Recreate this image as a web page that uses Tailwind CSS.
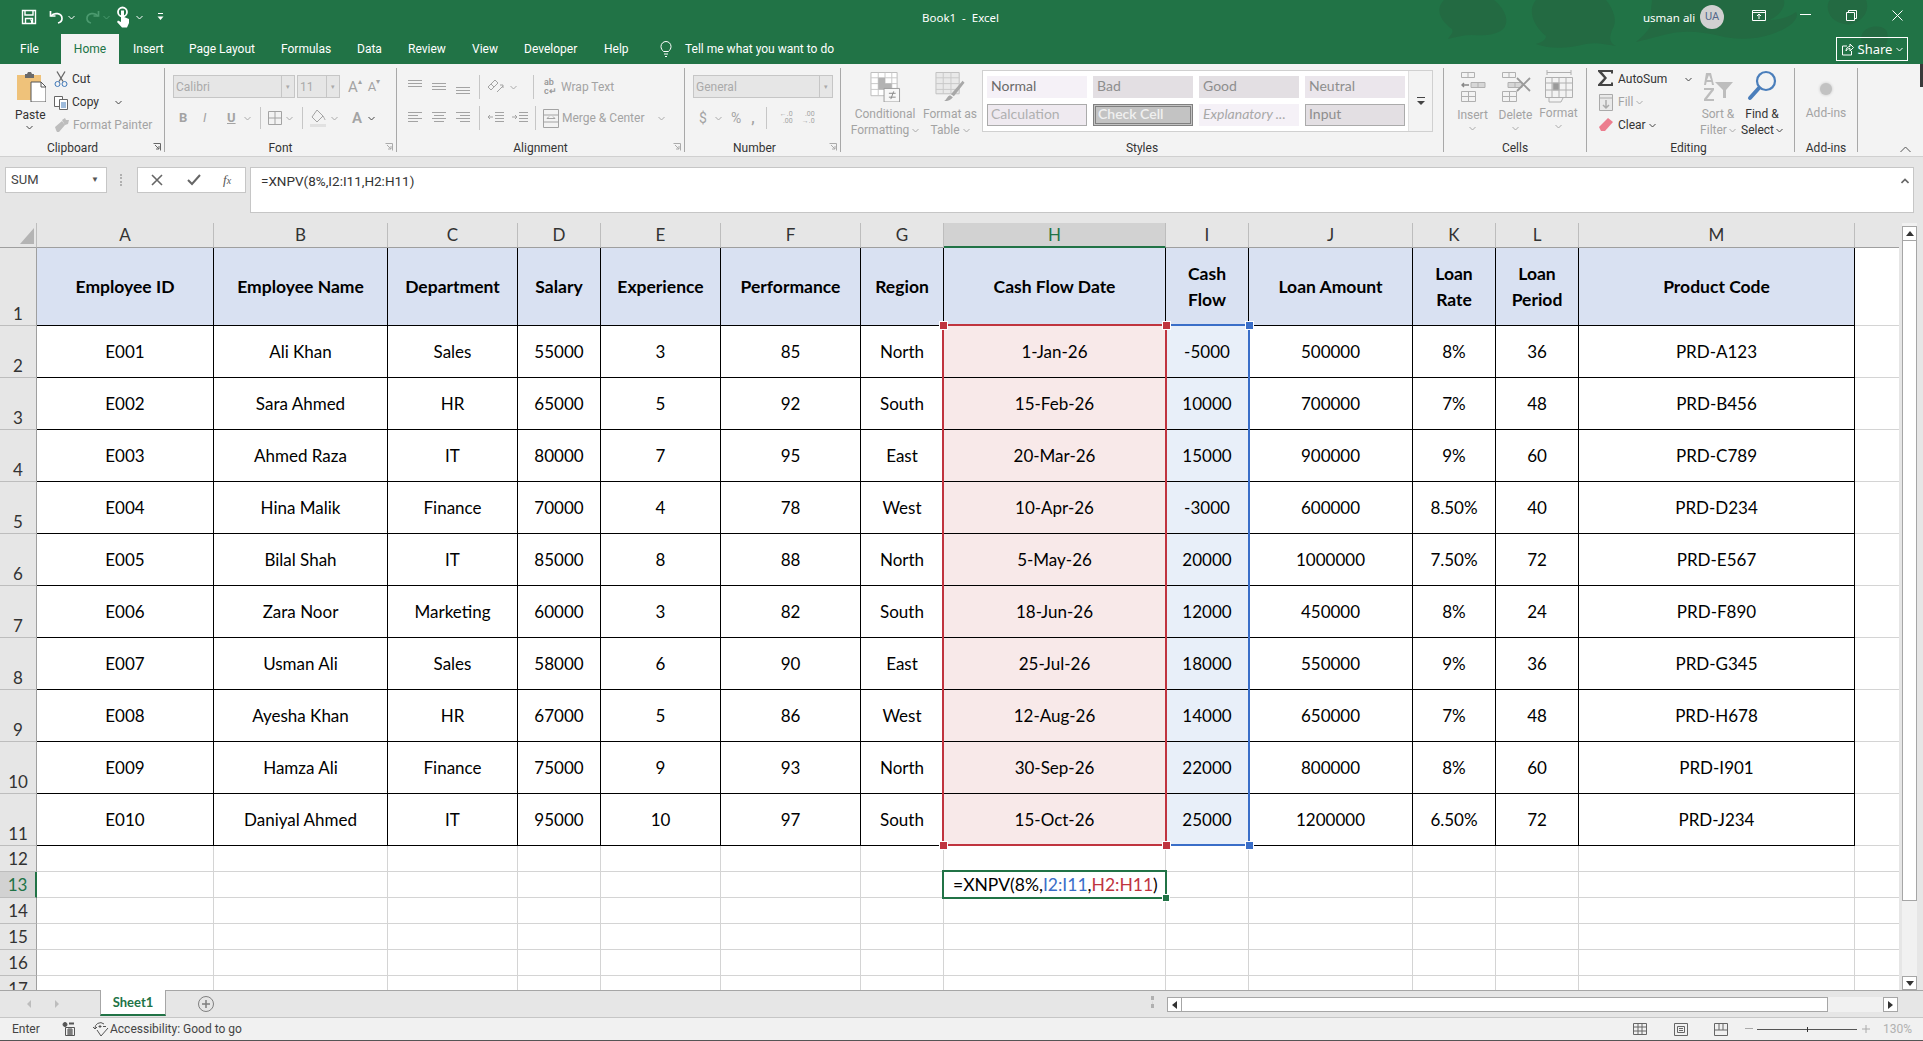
<!DOCTYPE html>
<html lang="en">
<head>
<meta charset="UTF-8">
<title>Book1 - Excel</title>
<script src="https://cdn.jsdelivr.net/npm/@tailwindcss/browser@4"></script>
</head>
<body class="bg-[#e6e6e6] overflow-hidden">
<div class="w-[1923px] h-[1041px] flex flex-col overflow-hidden font-['Roboto',sans-serif] text-[12px] text-[#333]">

  <!-- title bar + tabs -->
  <header class="relative h-[64px] shrink-0 bg-[#217346] text-white overflow-hidden">
    <svg class="absolute left-[1430px] top-0" width="480" height="64" viewBox="0 0 480 64" fill="#236a42">
      <path d="M14 0h50c10 8 16 20 10 28-6 7-20 8-32 7-8 0-16 2-24 4 2-4 6-6 4-10C12 22 4 10 14 0z"/>
      <path d="M106 0h70c8 10 12 22 6 30-2 6-4 12 4 16-12-2-20-4-30-2-16 4-34 6-50 0 6-2 10-4 10-8C106 28 96 12 106 0z"/>
      <path d="M222 0h132c2 8-6 16-14 20 8 0 18-2 26-8 4 6-6 16-24 22-18 6-36 6-52 2-16-4-36-6-52-2-12 3-24 6-32 8 12-10 18-18 16-28C220 10 222 4 222 0z"/>
      <path d="M400 0h36c4 10-2 20-14 24-10 2-22-4-24-14-1-4 0-8 2-10z"/>
      <path d="M432 34c4-8 18-10 24-4 4 6 0 18-4 22h-14c-6-4-8-12-6-18z"/>
    </svg>
    <div class="relative flex items-center h-[34px]">
      <svg class="ml-[21px]" width="16" height="16" viewBox="0 0 16 16" fill="none" stroke="#fff" stroke-width="1.4"><path d="M1.500 1.500h13v13h-13z"/><path d="M4 1.500v4.500h8v-4.500M4.500 14.500v-5h7v5"/><path d="M9 11h1.500v3.500" stroke-width="1"/></svg>
      <svg class="ml-[12px]" width="16" height="16" viewBox="0 0 16 16" fill="none" stroke="#fff" stroke-width="1.700"><path d="M1.500 2v5h5"/><path d="M2 7c3-4 11-3 11 2.500 0 2.500-2 4-4 4.500"/></svg>
      <svg class="ml-[3px]" width="7" height="5" viewBox="0 0 7 5" fill="none" stroke="#fff"><path d="M.5 1l3 3 3-3"/></svg>
      <svg class="ml-[9px]" width="16" height="16" viewBox="0 0 16 16" fill="none" stroke="#4b9a6f" stroke-width="1.700"><path d="M14.500 2v5h-5"/><path d="M14 7C11 3 3 4 3 9.500 3 12 5 13.500 7 14"/></svg>
      <svg class="ml-[3px]" width="7" height="5" viewBox="0 0 7 5" fill="none" stroke="#4b9a6f"><path d="M.5 1l3 3 3-3"/></svg>
      <svg class="ml-[5px]" width="16" height="22" viewBox="0 0 16 22"><circle cx="7.500" cy="6" r="4.500" fill="none" stroke="#fff" stroke-width="1.800"/><path d="M6 4.500h3V11l5 2v4l-2 4.500H7L2 16l1-1.500 3 1.500z" fill="#fff"/></svg>
      <svg class="ml-[5px]" width="7" height="5" viewBox="0 0 7 5" fill="none" stroke="#fff"><path d="M.5 1l3 3 3-3"/></svg>
      <svg class="ml-[14px]" width="7" height="8" viewBox="0 0 7 8" fill="#fff"><path d="M1 0h5v1H1zM.5 3.500h6L3.500 7z"/></svg>
      <span class="absolute left-[922px] top-[9px] text-[11.500px] leading-[18px] font-['Noto_Sans',sans-serif]">Book1&nbsp; -&nbsp; Excel</span>
      <span class="absolute left-[1643px] top-[9px] text-[11.500px] leading-[18px] font-['Noto_Sans',sans-serif]">usman ali</span>
      <span class="absolute left-[1700px] top-[5px] w-[24px] h-[24px] rounded-full bg-[#d1d1d1] text-[#53688a] text-[11px] leading-[24px] text-center">UA</span>
      <svg class="absolute left-[1752px] top-[10px]" width="14" height="12" viewBox="0 0 14 12" fill="none" stroke="#fff"><path d="M.5.500h13v10H.5zM.5 2.500h13M7 9V4M5 6l2-2 2 2"/></svg>
      <svg class="absolute left-[1800px] top-[14px]" width="11" height="2" viewBox="0 0 11 2" fill="#fff"><path d="M0 0h11v1H0z"/></svg>
      <svg class="absolute left-[1846px] top-[10px]" width="11" height="11" viewBox="0 0 11 11" fill="none" stroke="#fff"><path d="M.5 2.500h8v8h-8zM2.500 2.500v-2h8v8h-2"/></svg>
      <svg class="absolute left-[1892px] top-[10px]" width="11" height="11" viewBox="0 0 11 11" fill="none" stroke="#fff"><path d="M.5.5l10 10M10.500.5l-10 10"/></svg>
    </div>
    <nav class="relative flex items-stretch h-[30px] text-[12px] leading-[30px]">
      <span class="w-[61px] pl-[20px]">File</span>
      <span class="w-[58px] bg-[#f3f3f3] text-[#217346] text-center">Home</span>
      <span class="ml-[14px] w-[56px]">Insert</span>
      <span class="w-[92px]">Page Layout</span>
      <span class="w-[76px]">Formulas</span>
      <span class="w-[51px]">Data</span>
      <span class="w-[64px]">Review</span>
      <span class="w-[52px]">View</span>
      <span class="w-[80px]">Developer</span>
      <span class="w-[56px]">Help</span>
      <svg class="mt-[6px]" width="12" height="18" viewBox="0 0 12 18" fill="none" stroke="#fff"><path d="M3.500 11.500C2 10 1 8.500 1 6.500a5 5 0 0 1 10 0c0 2-1 3.500-2.500 5zM4 14h4M5 16.500h2"/></svg>
      <span class="ml-[13px]">Tell me what you want to do</span>
      <span class="absolute left-[1836px] top-[3px] w-[72px] h-[24px] border border-white flex items-center justify-center gap-[4px] text-[13px] leading-[22px] font-['Noto_Sans',sans-serif]">
        <svg width="13" height="13" viewBox="0 0 13 13" fill="none" stroke="#fff"><path d="M6 3H1.500v9h9V8M5 8c0-3 2-4.500 4-4.500V1l3.500 3.500L9 8V5.500C7 5.500 6 6.500 5 8z"/></svg>
        Share
        <svg width="7" height="5" viewBox="0 0 7 5" fill="none" stroke="#fff"><path d="M.5 1l3 3 3-3"/></svg>
      </span>
    </nav>
  </header>

  <!-- ribbon -->
  <section class="relative h-[93px] shrink-0 bg-[#f3f3f3] border-b border-[#d0d0d0] flex pt-[4px] leading-[14px]">

    <div class="w-[165px] h-[84px] border-r border-[#a8a8a8] relative flex flex-col">
      <div class="flex h-[70px] shrink-0">
        <div class="w-[54px] pl-[15px] flex flex-col items-start">
          <svg class="ml-[2px] mt-[4px]" width="29" height="30" viewBox="0 0 29 30"><path d="M0 3h24v25H0z" fill="#efc27a"/><path d="M8 2h2l1-2h3l1 2h2v4H8z" fill="#6a6a6a"/><path d="M14 10h10l5 5v15H14z" fill="#fff" stroke="#555"/><path d="M24 10v5h5" fill="none" stroke="#555"/></svg>
          <span class="mt-[6px] text-[#333]">Paste</span>
          <svg class="ml-[11px] mt-[3px]" width="7" height="5" viewBox="0 0 7 5" fill="none" stroke="#444"><path d="M.5 1l3 3 3-3"/></svg>
        </div>
        <div class="flex flex-col gap-[9px] pt-[4px]">
          <span class="flex items-center gap-[4px] h-[14px]"><svg width="14" height="16" viewBox="0 0 14 16" fill="none" stroke="#3f78b8"><path d="M3 .5l6 10M11 .5L5 10.500" stroke="#666" stroke-width="1.300"/><circle cx="3.500" cy="13" r="2.500"/><circle cx="10.500" cy="13" r="2.500"/></svg>Cut</span>
          <span class="flex items-center gap-[4px] h-[14px]"><svg width="14" height="15" viewBox="0 0 14 15" fill="#fff" stroke="#666"><path d="M.5 1.500h8v10h-8z"/><path d="M5.500 4.500h8v10h-8z"/><path d="M7 8h5M7 10h5M7 12h5" stroke="#3f78b8"/></svg>Copy<svg class="ml-[12px]" width="7" height="5" viewBox="0 0 7 5" fill="none" stroke="#444"><path d="M.5 1l3 3 3-3"/></svg></span>
          <span class="flex items-center gap-[4px] h-[14px] text-[#a3a3a3]"><svg width="15" height="15" viewBox="0 0 15 15" fill="#bdbdbd"><path d="M8 2l3-2 1 2 3 0-1 4-3 1zM1 9l7-6 3 4-6 7H3l-1-2z"/></svg>Format Painter</span>
        </div>
      </div>
      <span class="block text-center text-[#333] pr-[19px] mt-[3px]">Clipboard</span>
      <svg class="absolute left-[153px] bottom-[1px]" width="8" height="8" viewBox="0 0 8 8" fill="none" stroke="#666"><path d="M.5.500h7v7M2 2l4 4M3 6h3V3"/></svg>
    </div>

    <div class="w-[232px] h-[84px] border-r border-[#a8a8a8] relative flex flex-col pl-[8px]">
      <div class="flex items-center h-[23px] mt-[7px] shrink-0">
        <span class="w-[122px] h-[23px] border border-[#c6c6c6] bg-[#e6e6e6] text-[#aaa] leading-[22px] pl-[2px] flex justify-between">Calibri<span class="w-[13px] border-l border-[#c6c6c6] text-[7px] text-center">▾</span></span>
        <span class="ml-[2px] w-[43px] h-[23px] border border-[#c6c6c6] bg-[#e6e6e6] text-[#aaa] leading-[22px] pl-[2px] flex justify-between">11<span class="w-[13px] border-l border-[#c6c6c6] text-[7px] text-center">▾</span></span>
        <span class="ml-[8px] text-[15px] text-[#a3a3a3]">A</span><span class="text-[8px] text-[#a3a3a3] -mt-[10px]">▴</span>
        <span class="ml-[6px] text-[13px] text-[#a3a3a3]">A</span><span class="text-[8px] text-[#a3a3a3] -mt-[10px]">▾</span>
      </div>
      <div class="flex items-center h-[24px] mt-[8px] shrink-0 text-[#a3a3a3] font-bold">
        <span class="ml-[6px] w-[24px] text-[13px]">B</span>
        <span class="w-[24px] text-[13px] italic font-normal">I</span>
        <span class="w-[14px] text-[13px] underline">U</span>
        <svg class="ml-[3px]" width="7" height="5" viewBox="0 0 7 5" fill="none" stroke="#aaa"><path d="M.5 1l3 3 3-3"/></svg>
        <span class="ml-[9px] h-[22px] w-px bg-[#c6c6c6]"></span>
        <svg class="ml-[7px]" width="14" height="14" viewBox="0 0 14 14" fill="none" stroke="#a3a3a3"><path d="M.5.500h13v13H.5zM7 .5v13M.5 7h13"/></svg>
        <svg class="ml-[4px]" width="7" height="5" viewBox="0 0 7 5" fill="none" stroke="#aaa"><path d="M.5 1l3 3 3-3"/></svg>
        <span class="ml-[9px] h-[22px] w-px bg-[#c6c6c6]"></span>
        <svg class="ml-[7px]" width="17" height="18" viewBox="0 0 17 18" fill="none" stroke="#a3a3a3"><path d="M7 1L2 8l5 5 6-6z"/><path d="M13 7c1 2 2 3 2 4"/><path d="M0 15h16v3H0z" fill="#e1e1e1" stroke="none"/></svg>
        <svg class="ml-[4px]" width="7" height="5" viewBox="0 0 7 5" fill="none" stroke="#aaa"><path d="M.5 1l3 3 3-3"/></svg>
        <span class="ml-[14px] text-[15px] font-semibold">A</span>
        <svg class="ml-[6px]" width="7" height="5" viewBox="0 0 7 5" fill="none" stroke="#444"><path d="M.5 1l3 3 3-3"/></svg>
      </div>
      <span class="block text-center text-[#333] pr-[8px] mt-[11px]">Font</span>
      <svg class="absolute left-[220px] bottom-[1px]" width="8" height="8" viewBox="0 0 8 8" fill="none" stroke="#aaa"><path d="M.5.500h7v7M2 2l4 4M3 6h3V3"/></svg>
    </div>

    <div class="w-[288px] h-[84px] border-r border-[#a8a8a8] relative flex flex-col pl-[11px]">
      <div class="flex items-center h-[26px] mt-[6px] shrink-0 text-[#a3a3a3]">
        <svg width="63" height="16" viewBox="0 0 63 16" fill="none" stroke="#a3a3a3"><path d="M0 1.500h14M0 4.500h14M0 7.500h14M24 4.500h14M24 7.500h14M24 10.500h14M48 8.500h14M48 11.500h14M48 14.500h14"/></svg>
        <span class="ml-[8px] h-[24px] w-px bg-[#c6c6c6]"></span>
        <svg class="ml-[7px]" width="17" height="18" viewBox="0 0 17 18" fill="none" stroke="#a3a3a3"><path d="M1 9l7-7 3 3-7 7zM4 6l3 3M10 14l6-6M13 7h3v3"/></svg>
        <svg class="ml-[6px]" width="7" height="5" viewBox="0 0 7 5" fill="none" stroke="#aaa"><path d="M.5 1l3 3 3-3"/></svg>
        <span class="ml-[16px] h-[24px] w-px bg-[#c6c6c6]"></span>
        <span class="ml-[10px] w-[17px] text-[9px] leading-[9px] text-[#9a9a9a] font-semibold">ab<br>c↵</span>
        <span>Wrap Text</span>
      </div>
      <div class="flex items-center h-[24px] mt-[6px] shrink-0 text-[#a3a3a3]">
        <svg width="63" height="14" viewBox="0 0 63 14" fill="none" stroke="#a3a3a3"><path d="M0 1.500h14M0 4.500h10M0 7.500h14M0 10.500h10M24 1.500h14M26 4.500h10M24 7.500h14M26 10.500h10M48 1.500h14M52 4.500h10M48 7.500h14M52 10.500h10"/></svg>
        <span class="ml-[8px] h-[24px] w-px bg-[#c6c6c6]"></span>
        <svg class="ml-[8px]" width="40" height="14" viewBox="0 0 40 14" fill="none" stroke="#a3a3a3"><path d="M7 1.500h9M7 4.500h9M7 7.500h9M7 10.500h9M0 6h5M2 4L0 6l2 2" /><path d="M31 1.500h9M31 4.500h9M31 7.500h9M31 10.500h9M24 6h5M27 4l2 2-2 2"/></svg>
        <span class="ml-[7px] h-[24px] w-px bg-[#c6c6c6]"></span>
        <svg class="ml-[7px]" width="16" height="19" viewBox="0 0 16 19" fill="none" stroke="#a3a3a3"><path d="M.5.500h15v18H.5zM.5 6h15M.5 13h15M4 9.500h8M4 9.500l2-2M12 9.500l-2-2"/></svg>
        <span class="ml-[3px]">Merge &amp; Center</span>
        <svg class="ml-[14px]" width="7" height="5" viewBox="0 0 7 5" fill="none" stroke="#aaa"><path d="M.5 1l3 3 3-3"/></svg>
      </div>
      <span class="block text-center text-[#333] pr-[11px] mt-[11px]">Alignment</span>
      <svg class="absolute left-[276px] bottom-[1px]" width="8" height="8" viewBox="0 0 8 8" fill="none" stroke="#aaa"><path d="M.5.500h7v7M2 2l4 4M3 6h3V3"/></svg>
    </div>

    <div class="w-[156px] h-[84px] border-r border-[#a8a8a8] relative flex flex-col pl-[8px]">
      <span class="w-[140px] h-[23px] mt-[7px] shrink-0 border border-[#c6c6c6] bg-[#e6e6e6] text-[#aaa] leading-[22px] pl-[2px] flex justify-between">General<span class="w-[13px] border-l border-[#c6c6c6] text-[7px] text-center">▾</span></span>
      <div class="flex items-center h-[24px] mt-[8px] shrink-0 text-[#a3a3a3] text-[14px]">
        <span class="ml-[6px]">$</span>
        <svg class="ml-[8px]" width="7" height="5" viewBox="0 0 7 5" fill="none" stroke="#aaa"><path d="M.5 1l3 3 3-3"/></svg>
        <span class="ml-[9px]">%</span>
        <span class="ml-[10px] font-bold">,</span>
        <span class="ml-[11px] h-[22px] w-px bg-[#c6c6c6]"></span>
        <span class="ml-[8px] w-[18px] text-[7px] leading-[7px] text-right">←.0<br>.00</span>
        <span class="ml-[4px] w-[18px] text-[7px] leading-[7px] text-right">.00<br>→.0</span>
      </div>
      <span class="block text-center text-[#333] pr-[24px] mt-[11px]">Number</span>
      <svg class="absolute left-[144px] bottom-[1px]" width="8" height="8" viewBox="0 0 8 8" fill="none" stroke="#aaa"><path d="M.5.500h7v7M2 2l4 4M3 6h3V3"/></svg>
    </div>

    <div class="w-[603px] h-[84px] border-r border-[#a8a8a8] flex flex-col">
      <div class="flex h-[70px] shrink-0">
        <div class="w-[76px] ml-[6px] flex flex-col items-center text-[#a3a3a3] leading-[16px]">
          <svg class="mt-[4px]" width="31" height="31" viewBox="0 0 31 31"><path d="M.5.500h27v24H.5z" fill="#fff" stroke="#bbb"/><path d="M.5 6h27M.5 12h27M.5 18h27M8 .5v24M15 .5v24M22 .5v24" stroke="#c8c8c8" fill="none"/><path d="M8 6h7v12H8zM15 12h7v6h-7z" fill="#b3b3b3"/><path d="M14 17h16v14H14z" fill="#f7f7f7" stroke="#9a9a9a"/><path d="M19 22h7M19 26h7M24 20l-3 8" stroke="#888" fill="none"/></svg>
          <span class="mt-[4px]">Conditional</span>
          <span class="flex items-center gap-[3px]">Formatting<svg width="7" height="5" viewBox="0 0 7 5" fill="none" stroke="#aaa"><path d="M.5 1l3 3 3-3"/></svg></span>
        </div>
        <div class="w-[60px] ml-[-3px] flex flex-col items-center text-[#a3a3a3] leading-[16px]">
          <svg class="mt-[4px]" width="30" height="31" viewBox="0 0 30 31"><path d="M.5.500h24v22H.5z" fill="#e9e9e9" stroke="#c0c0c0"/><path d="M.5 6h24M.5 12h24M.5 18h24M8 .5v22M16 .5v22" stroke="#c8c8c8" fill="none"/><path d="M28 9l2 2-11 14-3-2zM15 24l3 2c-2 3-5 4-9 4 3-2 3-5 6-6z" fill="#a8a8a8"/></svg>
          <span class="mt-[4px]">Format as</span>
          <span class="flex items-center gap-[3px]">Table<svg width="7" height="5" viewBox="0 0 7 5" fill="none" stroke="#aaa"><path d="M.5 1l3 3 3-3"/></svg></span>
        </div>
        <div class="ml-[2px] mt-[2px] w-[451px] h-[62px] border border-[#d0d0d0] bg-white flex font-['Lato',sans-serif] text-[14px] leading-[20px]">
          <div class="grid grid-cols-[100px_100px_100px_100px] grid-rows-[22px_22px] gap-x-[6px] gap-y-[6px] pl-[4px] pt-[5px] w-[426px]">
            <span class="bg-[#f5f1f7] text-[#6a6a6a] pl-[4px]">Normal</span>
            <span class="bg-[#e3dfe3] text-[#8e8e8e] pl-[4px]">Bad</span>
            <span class="bg-[#e3dfe3] text-[#8e8e8e] pl-[4px]">Good</span>
            <span class="bg-[#ebe6ec] text-[#8e8e8e] pl-[4px]">Neutral</span>
            <span class="bg-[#efeaf0] border border-[#ababab] text-[#b0b0b0] pl-[3px] leading-[18px]">Calculation</span>
            <span class="bg-[#c3c3c3] border-[3px] border-double border-[#808080] text-[#f0f0f0] pl-[2px] font-semibold leading-[14px]">Check Cell</span>
            <span class="bg-[#f5f1f7] text-[#a8a8a8] italic pl-[4px]">Explanatory ...</span>
            <span class="bg-[#e3dfe3] border border-[#ababab] text-[#8e8e8e] pl-[3px] leading-[18px]">Input</span>
          </div>
          <span class="w-[24px] bg-[#f3f3f3] border-l border-[#e0e0e0] flex items-center justify-center">
            <svg width="8" height="9" viewBox="0 0 8 9" fill="#444"><path d="M0 0h8v1H0zM0 4h8L4 8z"/></svg>
          </span>
        </div>
      </div>
      <span class="block text-center text-[#333] mt-[3px]">Styles</span>
    </div>

    <div class="w-[143px] h-[84px] border-r border-[#a8a8a8] flex flex-col">
      <div class="flex h-[70px] shrink-0 pl-[7px] text-[#a3a3a3]">
        <div class="w-[43px] flex flex-col items-center">
          <svg class="mt-[4px]" width="26" height="30" viewBox="0 0 26 30" fill="none" stroke="#b0b0b0"><path d="M1.500 .5h13v5h-13zM8 .5v5M1.500 19.500h14v10h-14zM8.500 19.500v10M1.500 24.500h14"/><path d="M11 10.500h14v5H11zM18 10.500v5" fill="#d6d6d6"/><path d="M9 13H2M4 11l-2 2 2 2" stroke="#888" stroke-width="1.400"/></svg>
          <span class="mt-[6px]">Insert</span>
          <svg class="mt-[4px]" width="7" height="5" viewBox="0 0 7 5" fill="none" stroke="#aaa"><path d="M.5 1l3 3 3-3"/></svg>
        </div>
        <div class="w-[43px] flex flex-col items-center">
          <svg class="mt-[4px]" width="30" height="30" viewBox="0 0 30 30" fill="none" stroke="#b0b0b0"><path d="M1.500 .5h13v5h-13zM8 .5v5M1.500 19.500h14v10h-14zM8.500 19.500v10M1.500 24.500h14"/><path d="M7 10.500h14v5H7zM14 10.500v5" fill="#d6d6d6"/><path d="M16 6l13 13M29 6L16 19" stroke="#9a9a9a" stroke-width="1.800"/></svg>
          <span class="mt-[6px]">Delete</span>
          <svg class="mt-[4px]" width="7" height="5" viewBox="0 0 7 5" fill="none" stroke="#aaa"><path d="M.5 1l3 3 3-3"/></svg>
        </div>
        <div class="w-[43px] flex flex-col items-center">
          <svg class="mt-[1px]" width="28" height="34" viewBox="0 0 28 34" fill="none" stroke="#b0b0b0"><path d="M.5 8.500h27v20H.5zM.5 14h27M.5 21h27M7 8.500v20M14 8.500v20M21 8.500v20M2 3.500h24M2 1v5M26 1v5"/><path d="M8 14h6v7H8z" fill="#9a9a9a"/><path d="M4 29v4h12l2-4"/></svg>
          <span class="mt-[3px]">Format</span>
          <svg class="mt-[4px]" width="7" height="5" viewBox="0 0 7 5" fill="none" stroke="#aaa"><path d="M.5 1l3 3 3-3"/></svg>
        </div>
      </div>
      <span class="block text-center text-[#333] mt-[3px]">Cells</span>
    </div>

    <div class="w-[208px] h-[84px] border-r border-[#a8a8a8] flex flex-col">
      <div class="flex h-[70px] shrink-0">
        <div class="w-[108px] pl-[11px] flex flex-col gap-[9px] pt-[4px]">
          <span class="flex items-center h-[14px]"><svg class="mr-[4px] -mt-[2px]" width="16" height="16" viewBox="0 0 16 16" fill="#444"><path d="M0 0h15v3.500h-2V2H4l5 6-5 6h9v-1.500h2V16H0v-1.500L6 8 0 1.500z"/></svg>AutoSum<svg class="ml-[18px]" width="7" height="5" viewBox="0 0 7 5" fill="none" stroke="#444"><path d="M.5 1l3 3 3-3"/></svg></span>
          <span class="flex items-center h-[14px] text-[#a3a3a3]"><svg class="mr-[4px]" width="16" height="17" viewBox="0 0 16 17" fill="none" stroke="#aaa"><path d="M1.500 .5h13v16h-13z" fill="#e9e9e9"/><path d="M1.500 4h13" /><path d="M8 6v8M5 11l3 3 3-3" stroke-width="1.500"/></svg>Fill<svg class="ml-[3px]" width="7" height="5" viewBox="0 0 7 5" fill="none" stroke="#aaa"><path d="M.5 1l3 3 3-3"/></svg></span>
          <span class="flex items-center h-[14px]"><svg class="mr-[4px]" width="16" height="14" viewBox="0 0 16 14"><path d="M10 0l5 4-8 9H3L1 9z" fill="#ec7d8e"/></svg>Clear<svg class="ml-[3px]" width="7" height="5" viewBox="0 0 7 5" fill="none" stroke="#444"><path d="M.5 1l3 3 3-3"/></svg></span>
        </div>
        <div class="w-[46px] flex flex-col items-center text-[#a3a3a3] leading-[16px]">
          <svg class="mt-[4px]" width="30" height="30" viewBox="0 0 30 30" fill="#bdbdbd"><path d="M3 1h5l3 12H9l-.6-3H3.600L3 13H1zM4 8h4L6 3z" fill-rule="evenodd"/><path d="M1 16h10v2l-7 9h7v2H1v-2l7-9H1z"/><path d="M12 10h18l-7 8v8h-3v-8z"/></svg>
          <span class="mt-[4px]">Sort &amp;</span>
          <span class="flex items-center gap-[2px]">Filter<svg width="7" height="5" viewBox="0 0 7 5" fill="none" stroke="#aaa"><path d="M.5 1l3 3 3-3"/></svg></span>
        </div>
        <div class="w-[42px] flex flex-col items-center leading-[16px]">
          <svg class="mt-[2px]" width="30" height="32" viewBox="0 0 30 32" fill="none"><circle cx="19" cy="11" r="9" stroke="#4a7ebb" stroke-width="2.200"/><path d="M12 18L3 28" stroke="#4a7ebb" stroke-width="4" stroke-linecap="round"/></svg>
          <span class="mt-[4px]">Find &amp;</span>
          <span class="flex items-center gap-[2px]">Select<svg width="7" height="5" viewBox="0 0 7 5" fill="none" stroke="#444"><path d="M.5 1l3 3 3-3"/></svg></span>
        </div>
      </div>
      <span class="block text-center text-[#333] mt-[3px] pr-[4px]">Editing</span>
    </div>

    <div class="w-[63px] h-[84px] border-r border-[#a8a8a8] flex flex-col">
      <div class="flex flex-col items-center h-[70px] shrink-0 text-[#a3a3a3]">
        <span class="mt-[15px] w-[12px] h-[12px] rounded-full bg-[#c2c2c2] shadow-[0_0_3px_#c2c2c2]"></span>
        <span class="mt-[11px]">Add-ins</span>
      </div>
      <span class="block text-center text-[#333] mt-[3px]">Add-ins</span>
    </div>

    <svg class="absolute left-[1900px] top-[82px]" width="11" height="7" viewBox="0 0 11 7" fill="none" stroke="#555"><path d="M.5 6l5-5 5 5"/></svg>
    <span class="absolute left-[1920px] top-0 w-[3px] h-[23px] bg-[#3a3a3a]"></span>
  </section>

  <!-- formula bar -->
  <section class="h-[66px] shrink-0 bg-[#e6e6e6] flex items-start pt-[10px] text-[#444]">
    <div class="ml-[5px] w-[102px] h-[26px] bg-white border border-[#c6c6c6] flex items-center justify-between pl-[5px] pr-[7px] text-[13px]">SUM<span class="text-[8px] text-[#555]">▼</span></div>
    <span class="ml-[13px] mt-[7px] w-[2px] h-[12px] border-l-2 border-dotted border-[#b0b0b0]"></span>
    <div class="ml-[15px] w-[109px] h-[26px] bg-white border border-[#c6c6c6] flex items-center pl-[13px]">
      <svg width="12" height="12" viewBox="0 0 12 12" fill="none" stroke="#666" stroke-width="1.600"><path d="M1 1l10 10M11 1L1 11"/></svg>
      <svg class="ml-[24px]" width="14" height="12" viewBox="0 0 14 12" fill="none" stroke="#666" stroke-width="2"><path d="M1 6l4 4 8-9"/></svg>
      <span class="ml-[22px] font-['Liberation_Serif',serif] italic text-[13px] text-[#555]">f<span class="text-[10px]">x</span></span>
    </div>
    <div class="ml-[4px] w-[1664px] h-[46px] bg-white border border-[#c6c6c6] relative pl-[10px] text-[13.500px] leading-[26px] text-[#333]">=XNPV(8%,I2:I11,H2:H11)
      <svg class="absolute right-[4px] top-[10px]" width="8" height="6" viewBox="0 0 8 6" fill="none" stroke="#666" stroke-width="1.600"><path d="M.5 5l3.500-3.500L7.500 5"/></svg>
    </div>
  </section>

  <!-- sheet -->
  <main class="h-[767px] shrink-0 flex">
    <div class="relative w-[1899px] h-[767px] overflow-hidden bg-white font-['Lato',sans-serif] text-[17px] text-black">
      <table class="table-fixed border-separate border-spacing-0 w-[1983px]">
        <colgroup>
          <col class="w-[37px]"><col class="w-[177px]"><col class="w-[174px]"><col class="w-[130px]"><col class="w-[83px]"><col class="w-[120px]"><col class="w-[140px]"><col class="w-[83px]"><col class="w-[222px]"><col class="w-[83px]"><col class="w-[164px]"><col class="w-[83px]"><col class="w-[83px]"><col class="w-[276px]"><col class="w-[128px]">
        </colgroup>
        <thead class="[&_th]:bg-[#e6e6e6] [&_th]:border-r [&_th]:border-b [&_th]:border-r-[#bdbdbd] [&_th]:border-b-[#9f9f9f] [&_th]:font-normal [&_th]:text-[#333] [&_th]:leading-[20px]">
          <tr class="h-[25px]">
            <th><svg class="ml-[20px] mt-[2px]" width="14" height="16" viewBox="0 0 14 16" fill="#b4b4b4"><path d="M14 0v16H0z"/></svg></th>
            <th>A</th><th>B</th><th>C</th><th>D</th><th>E</th><th>F</th><th>G</th>
            <th class="!bg-[#d2d2d2] !border-b-2 !border-b-[#217346] !text-[#217346]">H</th>
            <th>I</th><th>J</th><th>K</th><th>L</th><th>M</th><th>N</th>
          </tr>
        </thead>
        <tbody class="[&_th]:bg-[#e6e6e6] [&_th]:border-r [&_th]:border-b [&_th]:border-r-[#9f9f9f] [&_th]:border-b-[#bdbdbd] [&_th]:font-normal [&_th]:text-[#333] [&_th]:text-[17px] [&_th]:align-bottom [&_th]:leading-[22px] [&_td]:border-r [&_td]:border-b [&_td]:border-black [&_td]:text-center [&_td]:align-middle [&_td:last-child]:border-[#d4d4d4]">
          <tr class="h-[78px] font-bold text-[17.500px] leading-[26px]"><th>1</th><td class="bg-[#d9e1f2]">Employee ID</td><td class="bg-[#d9e1f2]">Employee Name</td><td class="bg-[#d9e1f2]">Department</td><td class="bg-[#d9e1f2]">Salary</td><td class="bg-[#d9e1f2]">Experience</td><td class="bg-[#d9e1f2]">Performance</td><td class="bg-[#d9e1f2]">Region</td><td class="bg-[#d9e1f2]">Cash Flow Date</td><td class="bg-[#d9e1f2]">Cash<br>Flow</td><td class="bg-[#d9e1f2]">Loan Amount</td><td class="bg-[#d9e1f2]">Loan<br>Rate</td><td class="bg-[#d9e1f2]">Loan<br>Period</td><td class="bg-[#d9e1f2]">Product Code</td><td></td></tr>
          <tr class="h-[52px]"><th>2</th><td>E001</td><td>Ali Khan</td><td>Sales</td><td>55000</td><td>3</td><td>85</td><td>North</td><td class="bg-[#f8e9e9]">1-Jan-26</td><td class="bg-[#e8eff9]">-5000</td><td>500000</td><td>8%</td><td>36</td><td>PRD-A123</td><td></td></tr>
          <tr class="h-[52px]"><th>3</th><td>E002</td><td>Sara Ahmed</td><td>HR</td><td>65000</td><td>5</td><td>92</td><td>South</td><td class="bg-[#f8e9e9]">15-Feb-26</td><td class="bg-[#e8eff9]">10000</td><td>700000</td><td>7%</td><td>48</td><td>PRD-B456</td><td></td></tr>
          <tr class="h-[52px]"><th>4</th><td>E003</td><td>Ahmed Raza</td><td>IT</td><td>80000</td><td>7</td><td>95</td><td>East</td><td class="bg-[#f8e9e9]">20-Mar-26</td><td class="bg-[#e8eff9]">15000</td><td>900000</td><td>9%</td><td>60</td><td>PRD-C789</td><td></td></tr>
          <tr class="h-[52px]"><th>5</th><td>E004</td><td>Hina Malik</td><td>Finance</td><td>70000</td><td>4</td><td>78</td><td>West</td><td class="bg-[#f8e9e9]">10-Apr-26</td><td class="bg-[#e8eff9]">-3000</td><td>600000</td><td>8.50%</td><td>40</td><td>PRD-D234</td><td></td></tr>
          <tr class="h-[52px]"><th>6</th><td>E005</td><td>Bilal Shah</td><td>IT</td><td>85000</td><td>8</td><td>88</td><td>North</td><td class="bg-[#f8e9e9]">5-May-26</td><td class="bg-[#e8eff9]">20000</td><td>1000000</td><td>7.50%</td><td>72</td><td>PRD-E567</td><td></td></tr>
          <tr class="h-[52px]"><th>7</th><td>E006</td><td>Zara Noor</td><td>Marketing</td><td>60000</td><td>3</td><td>82</td><td>South</td><td class="bg-[#f8e9e9]">18-Jun-26</td><td class="bg-[#e8eff9]">12000</td><td>450000</td><td>8%</td><td>24</td><td>PRD-F890</td><td></td></tr>
          <tr class="h-[52px]"><th>8</th><td>E007</td><td>Usman Ali</td><td>Sales</td><td>58000</td><td>6</td><td>90</td><td>East</td><td class="bg-[#f8e9e9]">25-Jul-26</td><td class="bg-[#e8eff9]">18000</td><td>550000</td><td>9%</td><td>36</td><td>PRD-G345</td><td></td></tr>
          <tr class="h-[52px]"><th>9</th><td>E008</td><td>Ayesha Khan</td><td>HR</td><td>67000</td><td>5</td><td>86</td><td>West</td><td class="bg-[#f8e9e9]">12-Aug-26</td><td class="bg-[#e8eff9]">14000</td><td>650000</td><td>7%</td><td>48</td><td>PRD-H678</td><td></td></tr>
          <tr class="h-[52px]"><th>10</th><td>E009</td><td>Hamza Ali</td><td>Finance</td><td>75000</td><td>9</td><td>93</td><td>North</td><td class="bg-[#f8e9e9]">30-Sep-26</td><td class="bg-[#e8eff9]">22000</td><td>800000</td><td>8%</td><td>60</td><td>PRD-I901</td><td></td></tr>
          <tr class="h-[52px]"><th>11</th><td>E010</td><td>Daniyal Ahmed</td><td>IT</td><td>95000</td><td>10</td><td>97</td><td>South</td><td class="bg-[#f8e9e9]">15-Oct-26</td><td class="bg-[#e8eff9]">25000</td><td>1200000</td><td>6.50%</td><td>72</td><td>PRD-J234</td><td></td></tr>
        </tbody>
        <tbody class="[&_th]:bg-[#e6e6e6] [&_th]:border-r [&_th]:border-b [&_th]:border-r-[#9f9f9f] [&_th]:border-b-[#bdbdbd] [&_th]:font-normal [&_th]:text-[#333] [&_th]:leading-[24px] [&_td]:border-r [&_td]:border-b [&_td]:border-[#d4d4d4]">
          <tr class="h-[26px]"><th>12</th><td></td><td></td><td></td><td></td><td></td><td></td><td></td><td></td><td></td><td></td><td></td><td></td><td></td><td></td></tr>
          <tr class="h-[26px]"><th class="!bg-[#d2d2d2] !border-r-2 !border-r-[#217346] !text-[#217346]">13</th><td></td><td></td><td></td><td></td><td></td><td></td><td></td><td></td><td></td><td></td><td></td><td></td><td></td><td></td></tr>
          <tr class="h-[26px]"><th>14</th><td></td><td></td><td></td><td></td><td></td><td></td><td></td><td></td><td></td><td></td><td></td><td></td><td></td><td></td></tr>
          <tr class="h-[26px]"><th>15</th><td></td><td></td><td></td><td></td><td></td><td></td><td></td><td></td><td></td><td></td><td></td><td></td><td></td><td></td></tr>
          <tr class="h-[26px]"><th>16</th><td></td><td></td><td></td><td></td><td></td><td></td><td></td><td></td><td></td><td></td><td></td><td></td><td></td><td></td></tr>
          <tr class="h-[26px]"><th>17</th><td></td><td></td><td></td><td></td><td></td><td></td><td></td><td></td><td></td><td></td><td></td><td></td><td></td><td></td></tr>
        </tbody>
      </table>

      <!-- range highlights from the formula being edited -->
      <div class="absolute left-[942px] top-[101px] w-[225px] h-[522px] border-2 border-[#c0343f]"></div>
      <div class="absolute left-[1166px] top-[101px] w-[84px] h-[522px] border-2 border-l-0 border-[#3a6ec8]"></div>
      <span class="absolute left-[940px] top-[99px] w-[7px] h-[7px] bg-[#c0343f] outline outline-white"></span>
      <span class="absolute left-[1163px] top-[99px] w-[7px] h-[7px] bg-[#c0343f] outline outline-white"></span>
      <span class="absolute left-[1246px] top-[99px] w-[7px] h-[7px] bg-[#3a6ec8] outline outline-white"></span>
      <span class="absolute left-[940px] top-[619px] w-[7px] h-[7px] bg-[#c0343f] outline outline-white"></span>
      <span class="absolute left-[1163px] top-[619px] w-[7px] h-[7px] bg-[#c0343f] outline outline-white"></span>
      <span class="absolute left-[1246px] top-[619px] w-[7px] h-[7px] bg-[#3a6ec8] outline outline-white"></span>
      <!-- active cell -->
      <div class="absolute left-[942px] top-[647px] w-[225px] h-[29px] border-2 border-[#217346] bg-white pl-[9px] leading-[25px] text-[17.500px] whitespace-nowrap">=XNPV(8%,<span class="text-[#3a6ec8]">I2:I11</span>,<span class="text-[#c0343f]">H2:H11</span>)</div>
      <span class="absolute left-[1163px] top-[672px] w-[6px] h-[6px] bg-[#217346] outline outline-white"></span>
    </div>
    <div class="w-[24px] h-[767px] bg-[#e6e6e6] pl-[3px] flex">
      <div class="w-[15px] h-[767px] bg-[#f1f1f1] flex flex-col">
        <span class="h-[15px] mt-[3px] bg-white border border-[#a6a6a6] flex items-center justify-center"><svg width="8" height="5" viewBox="0 0 8 5" fill="#333"><path d="M4 0l4 5H0z"/></svg></span>
        <span class="h-[660px] bg-white border border-[#a6a6a6] border-t-0"></span>
        <span class="mt-auto h-[14px] bg-white border border-[#a6a6a6] flex items-center justify-center"><svg width="8" height="5" viewBox="0 0 8 5" fill="#333"><path d="M0 0h8L4 5z"/></svg></span>
      </div>
    </div>
  </main>

  <!-- sheet tabs -->
  <section class="h-[28px] shrink-0 bg-[#e6e6e6] border-t border-[#a6a6a6] border-b border-b-[#c6c6c6] flex items-start">
    <svg class="ml-[27px] mt-[9px]" width="4" height="8" viewBox="0 0 4 8" fill="#bdbdbd"><path d="M4 0v8L0 4z"/></svg>
    <svg class="ml-[24px] mt-[9px]" width="4" height="8" viewBox="0 0 4 8" fill="#bdbdbd"><path d="M0 0v8l4-4z"/></svg>
    <span class="ml-[41px] -mt-px w-[66px] h-[26px] bg-white border border-[#a6a6a6] border-t-0 border-b-2 border-b-[#217346] text-[#217346] font-bold text-[13px] leading-[25px] text-center font-['Lato',sans-serif]">Sheet1</span>
    <svg class="ml-[32px] mt-[5px]" width="16" height="16" viewBox="0 0 16 16" fill="none" stroke="#7f7f7f"><circle cx="8" cy="8" r="7.500"/><path d="M8 4v8M4 8h8" stroke-width="1.500"/></svg>
    <span class="ml-[937px] mt-[5px] w-[3px] h-[12px] border-l-[3px] border-dotted border-[#b0b0b0]"></span>
    <div class="ml-[13px] mt-[6px] w-[731px] h-[15px] flex bg-[#f1f1f1]">
      <span class="w-[15px] bg-white border border-[#a6a6a6] flex items-center justify-center"><svg width="5" height="8" viewBox="0 0 5 8" fill="#333"><path d="M5 0v8L0 4z"/></svg></span>
      <span class="w-[646px] bg-white border border-l-0 border-[#a6a6a6]"></span>
      <span class="ml-auto w-[15px] bg-white border border-[#a6a6a6] flex items-center justify-center"><svg width="5" height="8" viewBox="0 0 5 8" fill="#333"><path d="M0 0v8l5-4z"/></svg></span>
    </div>
  </section>

  <!-- status bar -->
  <footer class="h-[23px] shrink-0 bg-[#f1f1f1] border-b border-[#555] flex items-center text-[#444]">
    <span class="ml-[12px] w-[50px]">Enter</span>
    <svg width="13" height="14" viewBox="0 0 13 14" fill="none" stroke="#555"><path d="M3.500 5.500h9v8h-9zM5 8h6M5 10h6M5 12h6M7 6v7M9 6v7"/><circle cx="3" cy="2.500" r="2" fill="#555"/><path d="M7 1.500h5" stroke-width="2"/></svg>
    <svg class="ml-[17px]" width="17" height="16" viewBox="0 0 17 16" fill="none" stroke="#555"><path d="M3 8a5.500 5.500 0 0 1 9-5M1 6l2 2 2-2M8 4v3M6.500 5.500h3M11 5.500h3M5 9l4 6 7-8" /></svg>
    <span class="ml-[1px]">Accessibility: Good to go</span>
    <div class="ml-auto flex items-center">
      <svg width="14" height="12" viewBox="0 0 14 12" fill="none" stroke="#666"><path d="M.5.500h13v11H.5zM.5 4h13M.5 8h13M5 .5v11M9 .5v11"/></svg>
      <svg class="ml-[27px]" width="14" height="13" viewBox="0 0 14 13" fill="none" stroke="#666"><path d="M.5.500h13v12H.5zM3.500 3.500h7v6h-7zM5 5.500h4M5 7.500h4"/></svg>
      <svg class="ml-[26px]" width="14" height="13" viewBox="0 0 14 13" fill="none" stroke="#666"><path d="M.5.500h13v12H.5zM.5 7h13M5 .5V7M9 .5V7"/></svg>
      <svg class="ml-[17px]" width="8" height="2" viewBox="0 0 8 2" fill="#aaa"><path d="M0 0h8v1H0z"/></svg>
      <span class="ml-[4px] relative w-[100px] h-px bg-[#555]"><span class="absolute left-[50px] -top-[2px] w-px h-[5px] bg-[#333]"></span></span>
      <svg class="ml-[5px]" width="8" height="8" viewBox="0 0 8 8" fill="none" stroke="#aaa"><path d="M0 4h8M4 0v8"/></svg>
      <span class="ml-[13px] mr-[11px] text-[#b0b0b0]">130%</span>
    </div>
  </footer>
</div>
</body>
</html>
